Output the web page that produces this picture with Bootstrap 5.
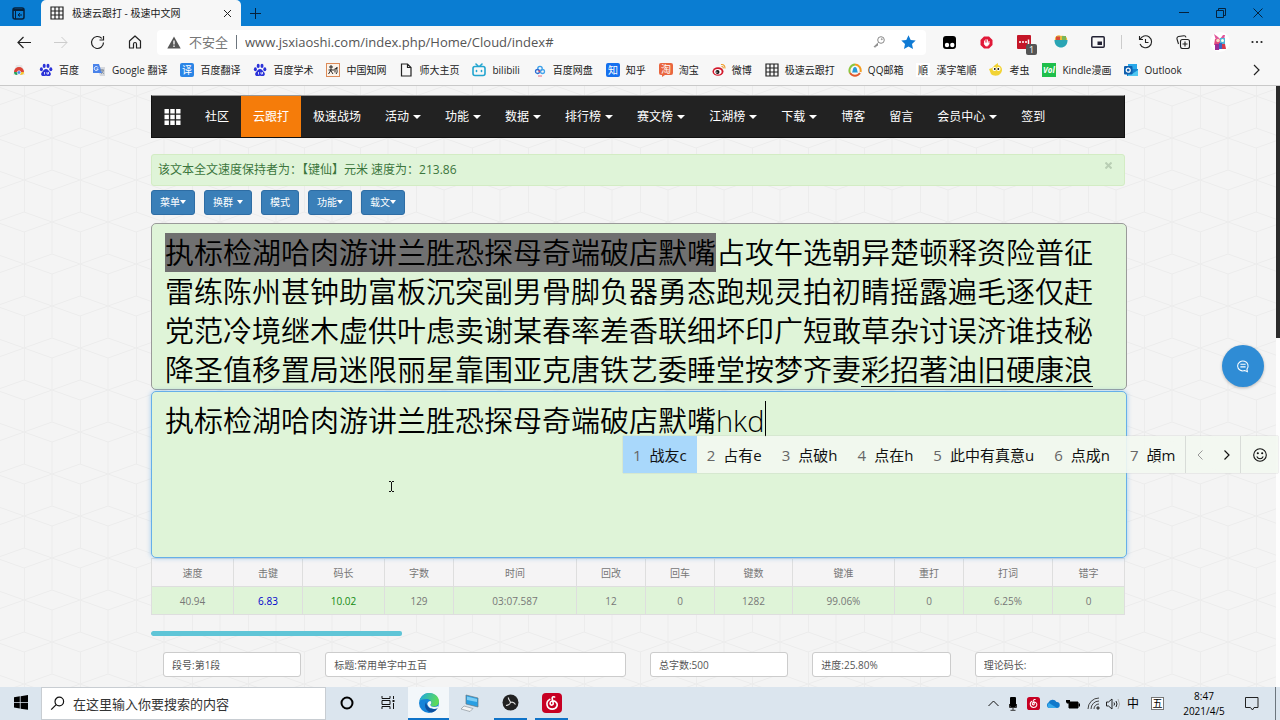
<!DOCTYPE html>
<html lang="zh-CN">
<head>
<meta charset="utf-8">
<meta name="viewport" content="width=device-width, initial-scale=1">
<title>极速云跟打 - 极速中文网</title>
<link href="https://cdn.jsdelivr.net/npm/bootstrap@5.3.0/dist/css/bootstrap.min.css" rel="stylesheet">
<style>
  :root { --mint: #dff4d8; --ink: #222; }
  body { font-family: "Open Sans", "Noto Sans CJK SC", sans-serif; font-size: 12px; line-height: 16px; color: #000; background: #f7f7f7; overflow: hidden; }
  svg { display: block; flex: none; }
  button { color: inherit; }
  .plain-btn { background: none; border: 0; padding: 0; display: flex; align-items: center; justify-content: center; }

  /* browser frame */
  .title-bar { background: #0a7dd2; height: 26px; }
  .cell { width: 37px; flex: none; }
  .browser-tab { width: 200px; background: #f7f7f7; border-radius: 5px 5px 0 0; font-size: 10px; color: #222; padding: 0 9px; }
  .tool-bar { height: 32px; padding: 0 5px; }
  .address { background: #fff; border-radius: 4px; height: 25px; padding: 0 10px; margin: 0 5px 0 4px; color: #777; }
  .address input { border: 0; outline: 0; background: none; padding: 0; color: #555; font-size: 13px; min-width: 0; }
  .address .unsafe { font-size: 13px; }
  .bookmarks { height: 28px; gap: 13px; padding: 0 12px 4px; font-size: 10px; border-bottom: 1px solid #c9c9c9; white-space: nowrap; }
  .bookmarks a { color: #222; text-decoration: none; display: flex; align-items: center; gap: 6px; flex: none; }
  .sep { width: 1px; height: 14px; background: #ccc; flex: none; margin: 0 5px; }
  .ext-count { right: 5px; bottom: -6px; background: #555; color: #fff; font-size: 9px; line-height: 11px; width: 11px; border-radius: 2px; text-align: center; }

  /* site */
  .site { background-color: #f4f4f4; background-position: 24px 0; min-height: 0;
    background-image: url("data:image/svg+xml,%3Csvg xmlns='http://www.w3.org/2000/svg' width='56' height='84'%3E%3Cpath fill='none' stroke='%23ececec' d='M0 10 28 0 56 10 28 20Z M28 20V84 M.5 62V84 M.5 0V42 M0 42 28 52 0 62 M56 42 28 52 56 62'/%3E%3C/svg%3E"); }
  .site-main { max-width: 974px; width: 100%; padding-top: 9px; }
  .scroll-track { width: 4px; background: #fdfdfd; flex: none; }
  .scroll-thumb { height: 42%; background: #2b2b2b; }
  .site-nav { background: var(--ink); border: 1px solid #111; border-top-color: #999; height: 43px; margin-bottom: 16px; }
  .site-nav a { color: #fff; text-decoration: none; display: flex; align-items: center; padding: 0 12px; }
  .site-nav a.current { background: #f57c0a; }
  .dropdown-toggle::after { margin-left: 4px; border-top-width: 4px; border-left-width: 4px; border-right-width: 4px; vertical-align: 2px; }
  .record { background: var(--mint); border: 1px solid #d3ecc4; border-radius: 3px; color: #3c763d; padding: 7px 6px; margin-bottom: 4px; height: 32px; }
  .record button { color: #b9ceb4; align-self: flex-start; width: 20px; }
  .tools .btn { font-size: 10px; line-height: 15px; padding: 4px 8px; color: #fff; background: #3a7fb8; border-color: #2e6da4; border-radius: 3px; }
  .tools .dropdown-toggle::after { margin-left: 0; border-left-width: 3px; border-right-width: 3px; }
  .tools .spaced::after { margin-left: 4px; }
  .tools { gap: 9px; margin-bottom: 8px; }

  .pane { background: var(--mint); border: 1px solid #9a9a9a; border-radius: 5px; height: 167px; padding: 9px 13px; font-size: 29px; line-height: 39px; font-weight: 350; overflow: hidden; margin-right: -2px; }
  .pane-wrap { margin-right: -2px; margin-top: 1px; }
  .done, .ahead { display: inline-block; height: 39px; vertical-align: top; }
  .done { background: #707070; }
  .ahead { text-decoration: underline; text-decoration-thickness: 1px; text-underline-offset: 5px; }
  textarea.pane { display: block; width: 100%; margin: 0; resize: none; outline: 0; border-color: #66afe9; box-shadow: 0 0 5px rgba(102,175,233,.6); color: #000; }
  .type-caret { left: 614px; top: 10px; width: 1px; height: 36px; background: #000; }

  .ime { left: 472px; top: 45px; width: 655px; height: 37px; background: rgba(243,248,241,.9); box-shadow: 0 0 1px #aaa; font-size: 15px; white-space: nowrap; z-index: 3; }
  .ime .word { padding: 0 10px; display: flex; align-items: center; gap: 8px; color: #111; height: 100%; }
  .ime .word span { color: #666; }
  .ime .word.on { background: #a9d8fb; }
  .ime .side { border-left: 1px solid #d8dcd8; height: 100%; }
  .ime .page-btn { width: 27px; }

  .stats { table-layout: fixed; width: 100%; font-size: 10px; color: #777; text-align: center; margin: 0 0 16px; border-collapse: collapse; background: #f5f4f5; }
  .stats th, .stats td { border: 1px solid #dedede; height: 28px; padding: 0; font-weight: 400; }
  .stats td { background: var(--mint); }
  .w69 { width: 69px; } .w82 { width: 82px; } .w78 { width: 78px; } .w89 { width: 89px; } .w102 { width: 102px; } .w123 { width: 123px; }
  .typed-bar { height: 5px; background: none; border-radius: 2px; margin-bottom: 16px; }
  .typed-bar .progress-bar { background: #5fc5d7; border-radius: 2px; }
  .facts .form-control { height: 25px; font-size: 10px; padding: 0 8px; color: #555; border: 1px solid #ccc; border-radius: 3px; }
  .chat { right: 16px; top: 259px; width: 42px; height: 42px; border-radius: 50%; background: #2f8cd5; color: #fff; box-shadow: 0 1px 3px rgba(0,0,0,.25); }
  .pointer { left: 389px; top: 395px; z-index: 4; }

  /* taskbar */
  .taskbar { background: #dbe5ee; height: 33px; }
  .task { width: 41px; height: 33px; border-bottom: 2px solid transparent; flex: none; }
  .task.active { background: #f3f7fa; border-bottom-color: #0f73c8; }
  .task.running::after { content: ""; position: absolute; left: 4px; right: 4px; bottom: -2px; height: 2px; background: #0f73c8; }
  .search { width: 285px; background: #fff; border: 1px solid #c8cdd2; gap: 8px; padding: 0 8px; }
  .search input { border: 0; outline: 0; padding: 0; background: none; font-size: 13px; width: 100%; color: #333; }
  .search input::placeholder { color: #333; opacity: 1; }
  .tray { width: 20px; flex: none; }
  .clock { width: 66px; font-size: 10px; line-height: 15px; }
</style>
</head>
<body class="vh-100 d-flex flex-column">

<svg width="0" height="0" class="position-absolute" aria-hidden="true">
  <symbol id="grid" viewBox="0 0 14 14"><path d="M1 1h12v12H1zM5 1v12M9 1v12M1 5h12M1 9h12" fill="none" stroke="#222" stroke-width="1.2"/></symbol>
  <symbol id="paw" viewBox="0 0 14 14"><g fill="#2b32d8"><ellipse cx="2.4" cy="6.3" rx="1.5" ry="2"/><ellipse cx="5.2" cy="2.9" rx="1.5" ry="2.1"/><ellipse cx="9" cy="2.9" rx="1.5" ry="2.1"/><ellipse cx="11.8" cy="6.3" rx="1.5" ry="2"/><path d="M7 6c2 0 2.4 1.800 4 3.200 1.600 1.500.8 3.900-1.200 3.900-1.100 0-1.700-.3-2.800-.3s-1.700.3-2.800.3c-2 0-2.800-2.400-1.200-3.900C4.600 7.800 5 6 7 6z"/></g><path d="M5.500 9v2.500M8 9v2h1.500V9" stroke="#fff" fill="none" stroke-width=".8"/></symbol>
  <symbol id="netease" viewBox="0 0 20 20"><rect width="20" height="20" rx="4" fill="#c70023"/><path d="M12.600 3.900c-1.600-.6-2.600.3-2.400 1.600l1 4.600c.3 2.600-3 2.700-3.100.3-.1-2.500 3.400-3.400 5.600-1.600 3 2.600 1.200 7.300-3.400 7.300-5.700 0-7.300-7-2.500-9.700" fill="none" stroke="#fff" stroke-width="1.600" stroke-linecap="round"/></symbol>
</svg>

<header>
  <div class="title-bar d-flex">
    <button class="plain-btn cell" aria-label="标签页操作"><svg width="13" height="13" viewBox="0 0 13 13" fill="none" stroke="#06213b"><rect x="1" y="1" width="11" height="11" rx="2" stroke-width="1.500"/><path d="M1 3h11" stroke-width="2"/><path d="M3.500 4v8M6 8h4M8 6 6 8l2 1.500"/></svg></button>
    <div class="browser-tab d-flex align-items-center ms-1">
      <svg width="14" height="14"><use href="#grid"/></svg>
      <span class="ms-2 flex-grow-1">极速云跟打 - 极速中文网</span>
      <button class="plain-btn" aria-label="关闭标签页"><svg width="9" height="9" viewBox="0 0 9 9" stroke="#222"><path d="m1 1 7 7M8 1 1 8"/></svg></button>
    </div>
    <button class="plain-btn ms-2" aria-label="新建标签页"><svg width="13" height="13" viewBox="0 0 13 13" stroke="#06213b"><path d="M6.500 1v11M1 6.500h11"/></svg></button>
    <div class="d-flex ms-auto">
      <button class="plain-btn cell" aria-label="最小化"><svg width="10" height="10" viewBox="0 0 10 10" stroke="#06213b"><path d="M0 4.500h10"/></svg></button>
      <button class="plain-btn cell" aria-label="还原"><svg width="10" height="10" viewBox="0 0 10 10" stroke="#06213b" fill="none"><path d="M.5 2.500h7v7h-7zM2.500 2V.5h7v7H8"/></svg></button>
      <button class="plain-btn cell me-1" aria-label="关闭"><svg width="10" height="10" viewBox="0 0 10 10" stroke="#06213b"><path d="m.5.5 9 9M9.500.5l-9 9"/></svg></button>
    </div>
  </div>

  <div class="tool-bar d-flex align-items-center">
    <button class="plain-btn cell" aria-label="后退"><svg width="14" height="13" viewBox="0 0 14 13" fill="none" stroke="#222" stroke-width="1.200"><path d="M14 6.500H1M6.500 1 1 6.500 6.500 12"/></svg></button>
    <button class="plain-btn cell" aria-label="前进"><svg width="14" height="13" viewBox="0 0 14 13" fill="none" stroke="#ccc"><path d="M0 6.500h13M7.500 1 13 6.500 7.500 12"/></svg></button>
    <button class="plain-btn cell" aria-label="刷新"><svg width="15" height="15" viewBox="0 0 15 15" fill="none" stroke="#222" stroke-width="1.200"><path d="M13.500 7.500a6 6 0 1 1-1.700-4.200M13.500 1v4h-4"/></svg></button>
    <button class="plain-btn cell" aria-label="主页"><svg width="14" height="14" viewBox="0 0 14 14" fill="none" stroke="#222" stroke-width="1.200" stroke-linejoin="round"><path d="M1.500 6 7 1l5.500 5v7h-4V9a1.500 1.500 0 0 0-3 0v4h-4z"/></svg></button>
    <div class="address d-flex align-items-center flex-grow-1">
      <svg width="14" height="13" viewBox="0 0 14 13"><path d="M7 .5 13.700 12.500H.3z" fill="#555"/><path d="M7 4.500v4M7 9.500V11" stroke="#fff" stroke-width="1.300"/></svg>
      <label class="unsafe ms-2" for="url">不安全</label>
      <span class="sep mx-2 bg-secondary"></span>
      <input id="url" class="flex-grow-1" value="www.jsxiaoshi.com/index.php/Home/Cloud/index#">
      <svg width="12" height="12" viewBox="0 0 12 12" fill="none" stroke="#888"><circle cx="8" cy="4" r="3.300"/><circle cx="8.800" cy="3.200" r=".5"/><path d="M5.500 6.300 1 10.800h2V9.500h1.500V8"/></svg>
      <svg class="ms-3" width="15" height="14" viewBox="0 0 15 14"><path d="m7.500.3 2.200 4.600 5 .6-3.700 3.400 1 5-4.500-2.500L3 13.900l1-5L.3 5.500l5-.6z" fill="#0f7ad4"/></svg>
    </div>
    <button class="plain-btn cell" aria-label="扩展一"><svg width="13" height="13" viewBox="0 0 13 13"><rect width="13" height="13" rx="3"/><circle cx="4" cy="9" r="2.200" fill="#fff"/><circle cx="9.300" cy="9" r="2.200" fill="#fff"/></svg></button>
    <button class="plain-btn cell" aria-label="广告拦截"><svg width="13" height="13" viewBox="0 0 13 13"><path d="M4 .5h5L12.500 4v5L9 12.500H4L.5 9V4z" fill="#e11938"/><path d="M4.500 7V4.500M6 7V3.200M7.500 7V3.500M9 7.500V5M4.300 7c0 4 4.700 4 4.700 0z" stroke="#fff" fill="#fff" stroke-width=".9"/></svg></button>
    <button class="plain-btn cell position-relative" aria-label="密码管理"><svg width="14" height="14" viewBox="0 0 14 14"><rect width="14" height="14" rx="1" fill="#c41628"/><path d="M2 7h2M5 7h2M8 7h2M11.500 4.500v5" stroke="#fff" stroke-width="1.500"/></svg><span class="ext-count position-absolute">1</span></button>
    <button class="plain-btn cell" aria-label="扩展二"><svg width="14" height="14" viewBox="0 0 14 14"><path d="M1 5C0 1 5-1 7 1c3-1 7 1 6 4z" fill="#e9b93b"/><path d="M2 1.500h4v3.500H2z" fill="#d84b3a"/><path d="M8 1h4v4H8z" fill="#78b558"/><path d="M.5 5h13c.2 10-13.200 10-13 0z" fill="#2aa5b4"/></svg></button>
    <button class="plain-btn cell" aria-label="画中画"><svg width="14" height="12" viewBox="0 0 14 12"><rect x=".8" y=".8" width="12.400" height="10.400" rx="1" fill="none" stroke="#222133" stroke-width="1.500"/><path d="M6.500 5.500H11V9H6.500z" fill="#222133"/></svg></button>
    <span class="sep"></span>
    <button class="plain-btn cell" aria-label="历史记录"><svg width="15" height="14" viewBox="0 0 15 14" fill="none" stroke="#222" stroke-width="1.100"><path d="M2 4.500A6 6 0 1 1 2 9M1.500 1v3.500H5M7.500 4v3.500h3"/></svg></button>
    <button class="plain-btn cell" aria-label="集锦"><svg width="14" height="14" viewBox="0 0 14 14" fill="none" stroke="#222" stroke-width="1.100"><rect x="4.500" y="4.500" width="9" height="9" rx="2"/><path d="M9 6.500v5M6.500 9h5M2.500 9 1 4a2 2 0 0 1 1.500-2.500L8 .8a2 2 0 0 1 2 1.500"/></svg></button>
    <button class="plain-btn cell" aria-label="用户"><svg width="20" height="20" viewBox="0 0 20 20"><circle cx="10" cy="10" r="10" fill="#fff"/><path d="M6 8 4 2l4 3 2 2 3-4 2 0-1 5z" fill="#e0569a"/><path d="M5 7h5v6H4z" fill="#e24b7f"/><path d="M10 6h5v6h-5z" fill="#52b5d8"/><circle cx="8" cy="8.500" r="1.800" fill="#f7d9c4"/><circle cx="12.500" cy="8.500" r="1.500" fill="#ffe"/><path d="M5 12h5l-1 6H5z" fill="#9c2f96"/><path d="M10 12h5l1 5h-5z" fill="#d43a4f"/><path d="M9 11h3v6H9z" fill="#3b66c4"/></svg></button>
    <button class="plain-btn cell" aria-label="更多"><svg width="12" height="4" viewBox="0 0 12 4" fill="#222"><circle cx="1.500" cy="2" r="1.100"/><circle cx="6" cy="2" r="1.100"/><circle cx="10.500" cy="2" r="1.100"/></svg></button>
  </div>

  <nav class="bookmarks d-flex align-items-center">
    <a href="#" aria-label="应用商店"><svg width="14" height="14" viewBox="0 0 14 14"><path d="M4 2h6l3 10H1z" fill="#e8e8e8"/><path d="M2 9a5 5 0 0 1 10 0z" fill="#dc4437"/><path d="M2 9c0 2 1 3 3 3l2-3z" fill="#27a35a"/><path d="M12 9c0 2-1 3-4 3l1-3z" fill="#f5c52d"/><circle cx="7" cy="9.500" r="1.800" fill="#4a86e8" stroke="#fff" stroke-width=".6"/></svg></a>
    <a href="#"><svg width="14" height="14"><use href="#paw"/></svg>百度</a>
    <a href="#"><svg width="14" height="14" viewBox="0 0 14 14"><path d="M5 4h8v9H8z" fill="#d5d8dd"/><path d="M1 1h6l3 9H1z" fill="#4a83ea"/><path d="M6 4.500A2 2 0 1 0 6.200 6H4.500" fill="none" stroke="#fff" stroke-width=".9"/><path d="M8 7h4M10 6v1c0 2 1 3 2 4M11.500 7c0 2-1.500 3-2.500 4" stroke="#7b8794" stroke-width=".8" fill="none"/></svg>Google 翻译</a>
    <a href="#"><svg width="14" height="14" viewBox="0 0 14 14"><rect width="14" height="14" rx="2" fill="#2b85e6"/><text x="7" y="10.800" font-size="10" fill="#fff" text-anchor="middle">译</text></svg>百度翻译</a>
    <a href="#"><svg width="14" height="14"><use href="#paw"/></svg>百度学术</a>
    <a href="#"><svg width="14" height="14" viewBox="0 0 14 14" fill="none"><rect x=".5" y=".5" width="13" height="13" fill="#fbf3ea" stroke="#dc8a57"/><path d="M3 4h4M5 2v5M2.500 7H8M5 7l-2.500 4M5 8l2 3M8.500 6l3-1M9 6v3.500M11 4c-1 3 1.500 4-1 7" stroke="#111" stroke-width=".9"/></svg>中国知网</a>
    <a href="#"><svg width="14" height="14" viewBox="0 0 14 14"><path d="M2.500 1h6L12 4.500V13H2.500zM8.500 1v3.500H12" fill="none" stroke="#222" stroke-width="1.200"/></svg>师大主页</a>
    <a href="#"><svg width="14" height="14" viewBox="0 0 14 14" fill="none" stroke="#23a5cf" stroke-width="1.600" stroke-linecap="round"><rect x="1" y="3.500" width="12" height="9" rx="2"/><path d="m4 1 2 2M10 1 8 3M4.500 7.500v1M9.500 7.500v1"/></svg>bilibili</a>
    <a href="#"><svg width="14" height="14" viewBox="0 0 14 14" fill="none" stroke-width="1.300"><circle cx="7" cy="5.500" r="2.200" stroke="#3b9fe8"/><circle cx="4.500" cy="8.500" r="2" stroke="#2b6fd6"/><circle cx="9.500" cy="8.500" r="2" stroke="#45a4ec"/><path d="m5.500 7.500 1.500 1.500" stroke="#e2455e"/><path d="M5 13h4" stroke="#e2455e" stroke-width=".8"/></svg>百度网盘</a>
    <a href="#"><svg width="14" height="14" viewBox="0 0 14 14"><rect width="14" height="14" rx="2" fill="#1670ee"/><text x="7" y="10.800" font-size="10" fill="#fff" text-anchor="middle">知</text></svg>知乎</a>
    <a href="#"><svg width="14" height="14" viewBox="0 0 14 14"><path d="M2 0h10a2 2 0 0 1 2 2v8a2 2 0 0 1-2 2H6l-3 2 0-2H2a2 2 0 0 1-2-2V2a2 2 0 0 1 2-2z" fill="#e9663f"/><text x="7" y="9.800" font-size="10" fill="#fff" text-anchor="middle">淘</text></svg>淘宝</a>
    <a href="#"><svg width="14" height="14" viewBox="0 0 14 14"><ellipse cx="6" cy="8.500" rx="5.500" ry="4.300" fill="#d2182b"/><ellipse cx="5.800" cy="8.800" rx="3.800" ry="2.800" fill="#fff"/><circle cx="5.500" cy="8.900" r="2" fill="#111"/><circle cx="4.900" cy="9.200" r=".6" fill="#fff"/><path d="M9 1.500c3-.5 4.500 2 3.800 4M9.500 3.500c1.300-.2 2 .6 1.700 1.800" fill="none" stroke="#ef9c2b" stroke-width="1.100"/></svg>微博</a>
    <a href="#"><svg width="14" height="14"><use href="#grid"/></svg>极速云跟打</a>
    <a href="#"><svg width="14" height="14" viewBox="0 0 14 14" fill="none" stroke-width="2"><path d="M2 10A6 6 0 0 1 7 1.500" stroke="#8dc63f"/><path d="M7 1.500A6 6 0 0 1 12.500 9" stroke="#f39c1f"/><path d="M12 10a6 6 0 0 1-10 0" stroke="#e2582c"/><path d="M4 9.500c1-1 .5-5.500 3-5.500s2 4.500 3 5.500z" fill="#279ad8"/></svg>QQ邮箱</a>
    <a href="#"><svg width="14" height="14" viewBox="0 0 14 14"><rect width="14" height="14" fill="#fff"/><text x="7" y="10.800" font-size="10" fill="#222" text-anchor="middle">順</text></svg>漢字笔順</a>
    <a href="#"><svg width="14" height="14" viewBox="0 0 14 14"><path d="M6 2 9 0l0 2c4 1 5 5 3 8-3 4-8 3-10 1L0 6l3-1z" fill="#f2d334"/><circle cx="5.500" cy="6" r="2" fill="#fff"/><circle cx="9.500" cy="6" r="2" fill="#fff"/><circle cx="5.800" cy="6" r=".9"/><circle cx="9.300" cy="6" r=".9"/></svg>考虫</a>
    <a href="#"><svg width="14" height="14" viewBox="0 0 14 14"><rect width="14" height="14" fill="#1fbf4b"/><text x="7" y="10" font-size="8" font-weight="700" font-style="italic" fill="#fff" text-anchor="middle">Vol</text></svg>Kindle漫画</a>
    <a href="#"><svg width="14" height="14" viewBox="0 0 14 14"><path d="M4 1h9v6H4z" fill="#28a8ea"/><path d="M3 6h11v7H3z" fill="#1684d0"/><path d="m14 7-6 4-4-3v5h10z" fill="#50c8f2"/><rect y="3" width="8.500" height="8.500" rx="1" fill="#0f5fae"/><circle cx="4.200" cy="7.200" r="2" fill="none" stroke="#fff" stroke-width="1.200"/></svg>Outlook</a>
    <button class="plain-btn ms-auto me-2" aria-label="更多收藏"><svg width="7" height="12" viewBox="0 0 7 12" fill="none" stroke="#222" stroke-width="1.200"><path d="m1 1 5 5-5 5"/></svg></button>
  </nav>
</header>

<div class="site flex-grow-1 d-flex position-relative overflow-hidden">
  <div class="flex-grow-1">
    <main class="site-main mx-auto">
      <nav class="site-nav d-flex">
        <a href="#" aria-label="全部"><svg width="17" height="16" viewBox="0 0 16 16" fill="#fff"><path d="M0 0h4.400v4.400H0zM5.800 0h4.400v4.400H5.800zM11.600 0H16v4.400h-4.400zM0 5.800h4.400v4.400H0zM5.800 5.800h4.400v4.400H5.800zM11.600 5.800H16v4.400h-4.400zM0 11.600h4.400V16H0zM5.800 11.600h4.400V16H5.800zM11.600 11.600H16V16h-4.400z"/></svg></a>
        <a href="#">社区</a>
        <a href="#" class="current">云跟打</a>
        <a href="#">极速战场</a>
        <a href="#" class="dropdown-toggle">活动</a>
        <a href="#" class="dropdown-toggle">功能</a>
        <a href="#" class="dropdown-toggle">数据</a>
        <a href="#" class="dropdown-toggle">排行榜</a>
        <a href="#" class="dropdown-toggle">赛文榜</a>
        <a href="#" class="dropdown-toggle">江湖榜</a>
        <a href="#" class="dropdown-toggle">下载</a>
        <a href="#">博客</a>
        <a href="#">留言</a>
        <a href="#" class="dropdown-toggle">会员中心</a>
        <a href="#">签到</a>
      </nav>

      <div class="record d-flex align-items-center" role="status">
        <span class="flex-grow-1">该文本全文速度保持者为：【键仙】元米 速度为：213.86</span>
        <button class="plain-btn" aria-label="关闭提示"><svg width="7" height="7" viewBox="0 0 7 7" stroke="currentColor" stroke-width="2"><path d="m.5.5 6 6M6.500.5l-6 6"/></svg></button>
      </div>

      <div class="tools d-flex">
        <button class="btn dropdown-toggle">菜单</button>
        <button class="btn dropdown-toggle spaced">换群</button>
        <button class="btn">模式</button>
        <button class="btn dropdown-toggle">功能</button>
        <button class="btn dropdown-toggle">载文</button>
      </div>

      <div class="pane"><span class="done">执标检湖哈肉游讲兰胜恐探母奇端破店默嘴</span>占攻午选朝异楚顿释资险普征雷练陈州甚钟助富板沉突副男骨脚负器勇态跑规灵拍初睛摇露遍毛逐仅赶党范冷境继木虚供叶虑卖谢某春率差香联细坏印广短敢草杂讨误济谁技秘降圣值移置局迷限丽星靠围亚克唐铁艺委睡堂按梦齐妻<span class="ahead">彩招著油旧硬康浪</span></div>

      <div class="pane-wrap position-relative">
        <textarea class="pane" aria-label="跟打区" spellcheck="false">执标检湖哈肉游讲兰胜恐探母奇端破店默嘴hkd</textarea>
        <span class="type-caret position-absolute"></span>
        <div class="ime position-absolute d-flex align-items-center">
          <button class="plain-btn word on"><span>1</span>战友c</button>
          <button class="plain-btn word"><span>2</span>占有e</button>
          <button class="plain-btn word"><span>3</span>点破h</button>
          <button class="plain-btn word"><span>4</span>点在h</button>
          <button class="plain-btn word"><span>5</span>此中有真意u</button>
          <button class="plain-btn word"><span>6</span>点成n</button>
          <button class="plain-btn word"><span>7</span>頕m</button>
          <div class="side d-flex ms-auto">
            <button class="plain-btn page-btn" aria-label="上一页"><svg width="6" height="10" viewBox="0 0 6 10" fill="none" stroke="#999"><path d="M5.500.5 1 5l4.500 4.500"/></svg></button>
            <button class="plain-btn page-btn" aria-label="下一页"><svg width="6" height="10" viewBox="0 0 6 10" fill="none" stroke="#111" stroke-width="1.200"><path d="M.5.5 5 5 .5 9.500"/></svg></button>
          </div>
          <div class="side d-flex px-2">
            <button class="plain-btn px-1" aria-label="表情"><svg width="14" height="14" viewBox="0 0 14 14" fill="none" stroke="#111" stroke-width="1.100"><circle cx="7" cy="7" r="6.300"/><path d="M3.800 8.500c1.500 3 5 3 6.400 0"/><circle cx="4.800" cy="5.300" r=".5" fill="#111"/><circle cx="9.200" cy="5.300" r=".5" fill="#111"/></svg></button>
          </div>
        </div>
      </div>

      <table class="stats">
        <colgroup><col class="w82"><col class="w69"><col class="w82"><col class="w69"><col class="w123"><col class="w69"><col class="w69"><col class="w78"><col class="w102"><col class="w69"><col class="w89"><col></colgroup>
        <thead><tr><th>速度</th><th>击键</th><th>码长</th><th>字数</th><th>时间</th><th>回改</th><th>回车</th><th>键数</th><th>键准</th><th>重打</th><th>打词</th><th>错字</th></tr></thead>
        <tbody><tr><td>40.94</td><td style="color:#00c">6.83</td><td style="color:#118a11">10.02</td><td>129</td><td>03:07.587</td><td>12</td><td>0</td><td>1282</td><td>99.06%</td><td>0</td><td>6.25%</td><td>0</td></tr></tbody>
      </table>

      <div class="progress typed-bar" role="progressbar" aria-label="进度" aria-valuenow="25.8" aria-valuemin="0" aria-valuemax="100"><div class="progress-bar" style="width:25.8%"></div></div>

      <div class="row mx-0 facts">
        <div class="col-2"><input class="form-control" aria-label="段号" value="段号:第1段"></div>
        <div class="col-4"><input class="form-control" aria-label="标题" value="标题:常用单字中五百"></div>
        <div class="col-2"><input class="form-control" aria-label="总字数" value="总字数:500"></div>
        <div class="col-2"><input class="form-control" aria-label="进度" value="进度:25.80%"></div>
        <div class="col-2"><input class="form-control" aria-label="理论码长" value="理论码长:"></div>
      </div>
    </main>
  </div>
  <div class="scroll-track"><div class="scroll-thumb"></div></div>

  <button class="chat plain-btn position-absolute" aria-label="客服"><svg width="14" height="14" viewBox="0 0 16 16" fill="none" stroke="#fff" stroke-width="1.200"><path d="M10 13.200a6 5.600 0 1 1 2.500-1.700L13 14.500z"/><path d="M5 6h6M5 9h6"/></svg></button>
  <svg class="pointer position-absolute" width="5" height="11" viewBox="0 0 5 11" fill="none" stroke="#111"><path d="M0 .5h2M3 .5h2M2.500 1v9M0 10.500h2M3 10.500h2"/></svg>
</div>

<footer class="taskbar d-flex align-items-stretch">
  <button class="plain-btn task" aria-label="开始"><svg width="14" height="15" viewBox="0 0 14 15"><path d="m0 2.200 5.800-.9v5.700H0zM6.600 1.200 14 0v7H6.600zM0 7.800h5.800v5.700L0 12.600zM6.600 7.800H14v7l-7.400-1.100z"/></svg></button>
  <div class="search d-flex align-items-center">
    <svg width="15" height="15" viewBox="0 0 15 15" fill="none" stroke="#111" stroke-width="1.200"><circle cx="9.300" cy="5.500" r="4.300"/><path d="m6.200 8.600-5 5"/></svg>
    <input type="search" aria-label="搜索" placeholder="在这里输入你要搜索的内容">
  </div>
  <button class="plain-btn task" aria-label="语音助手"><svg width="14" height="14" viewBox="0 0 14 14"><circle cx="7" cy="7" r="5.500" fill="none" stroke="#000" stroke-width="2"/></svg></button>
  <button class="plain-btn task" aria-label="任务视图"><svg width="14" height="13" viewBox="0 0 14 13" fill="none" stroke="#111"><path d="M1 0v2.500h8V0M1 13v-2.500h8V13M1 4.500h8v4H1zM12.500 0v3M12.500 7v6"/><path d="M11.500 4h2v2h-2z" fill="#111" stroke="none"/></svg></button>
  <button class="plain-btn task active" aria-label="浏览器"><svg width="20" height="20" viewBox="0 0 20 20"><defs><linearGradient id="eg" x1="0" y1="0" x2="1" y2=".3"><stop stop-color="#1ba6e6"/><stop offset="1" stop-color="#5ddb5b"/></linearGradient></defs><circle cx="10" cy="10" r="10" fill="#1583d8"/><path d="M.3 8.500C2 2.500 6 0 10.500 0 16 0 20 4 20 8.500c0 3.500-2.500 5-5.500 5-2 0-3.500-.8-2.500-2 1.500-3-1-5.500-4.500-5.500C3.500 6 1 7 .3 8.500z" fill="url(#eg)"/><path d="M7 9c-3 6 2 10.500 6 10.500A10 10 0 0 0 18.800 15C14 17.500 7.500 15 7 9z" fill="#0d4f9e"/><path d="M11.500 8c1.500 1.500.5 3-.2 3.700.5 2 3.500 3.300 8 1.300l-.5 2c-4 2.200-9.500.5-10.500-4C8.500 9.500 9.500 8 11.500 8z" fill="#f3f7fa"/></svg></button>
  <button class="plain-btn task" aria-label="远程电脑"><svg width="20" height="18" viewBox="0 0 20 18"><path d="m6 1 12 3v9L6 10z" fill="#299fe3" stroke="#69777f" stroke-width=".7"/><path d="m7 2.500 10 2.400v3L7 6z" fill="#7bcdf5"/><path d="m4 12 9 2.500-3 3L1 15z" fill="#f4f4f4" stroke="#8c969e" stroke-width=".7"/></svg></button>
  <button class="plain-btn task running position-relative" aria-label="录屏"><svg width="17" height="17" viewBox="0 0 17 17"><circle cx="8.500" cy="8.500" r="8" fill="#222"/><path d="M8.500 8.500C8 6 6 5.500 6.500 3.500M8.500 8.500c2.500-1 4 .5 5 2M8.500 8.500C8 11 6 11 4 11.500" fill="none" stroke="#ddd" stroke-width="1.200"/></svg></button>
  <button class="plain-btn task running position-relative" aria-label="音乐"><svg width="20" height="20"><use href="#netease"/></svg></button>

  <div class="d-flex ms-auto align-items-stretch">
    <button class="plain-btn tray" aria-label="显示隐藏图标"><svg width="11" height="7" viewBox="0 0 11 7" fill="none" stroke="#111"><path d="m.5 6 5-5 5 5"/></svg></button>
    <button class="plain-btn tray" aria-label="麦克风"><svg width="10" height="14" viewBox="0 0 10 14"><rect x="2" width="6" height="10" rx="1"/><path d="M1.500 7v3.500h7V7M5 10v3M2.500 13.300h5" fill="none" stroke="#333"/></svg></button>
    <button class="plain-btn tray" aria-label="音乐"><svg width="13" height="13"><use href="#netease"/></svg></button>
    <button class="plain-btn tray" aria-label="云盘"><svg width="14" height="9" viewBox="0 0 14 9"><path d="M3 9a3 3 0 0 1-.5-5.500A4.500 4.500 0 0 1 10.500 3 3 3 0 0 1 11 9z" fill="#1179cb"/><path d="M3 9a3 3 0 0 1 0-5l8 5z" fill="#37a9ec"/></svg></button>
    <button class="plain-btn tray" aria-label="电池"><svg width="14" height="10" viewBox="0 0 14 10"><path d="M3 3h9v6H3z" stroke="#000"/><path d="M12.500 4.500H14v3h-1.500zM0 1h4v2l-1 1.500H1L0 3zM1 0v2M3 0v2"/></svg></button>
    <button class="plain-btn tray" aria-label="网络"><svg width="13" height="13" viewBox="0 0 13 13" fill="none" stroke="#444"><path d="M1 12A11 11 0 0 1 12 1M4 12a8 8 0 0 1 8-8M7 12a5 5 0 0 1 5-5"/><circle cx="11" cy="11" r="1.200" fill="#444"/></svg></button>
    <button class="plain-btn tray" aria-label="音量"><svg width="14" height="12" viewBox="0 0 14 12" fill="none" stroke="#222"><path d="M.5 4h2L6 1v10L2.500 8h-2z"/><path d="M8 4.500q1 1.500 0 3M10 3q2 3 0 6"/><path d="M12 1q3 5 0 10" stroke="#aaa"/></svg></button>
    <button class="plain-btn tray" aria-label="输入法">中</button>
    <button class="plain-btn tray mx-1" aria-label="五笔"><svg width="13" height="13" viewBox="0 0 13 13"><rect x=".5" y=".5" width="12" height="12" fill="#fff" stroke="#777"/><text x="6.500" y="10" font-size="10" text-anchor="middle">五</text></svg></button>
    <div class="clock text-center d-flex flex-column justify-content-center"><span>8:47</span><span>2021/4/5</span></div>
    <button class="plain-btn px-2" aria-label="通知"><svg width="14" height="14" viewBox="0 0 14 14" fill="none" stroke="#222"><path d="M.5.5h12.500v10H9L7.500 13l-2-2.500h-5z"/></svg></button>
    <div class="border-start ms-2 ps-1 border-secondary"></div>
  </div>
</footer>
<script src="https://cdn.jsdelivr.net/npm/bootstrap@5.3.0/dist/js/bootstrap.bundle.min.js"></script>
</body>
</html>
